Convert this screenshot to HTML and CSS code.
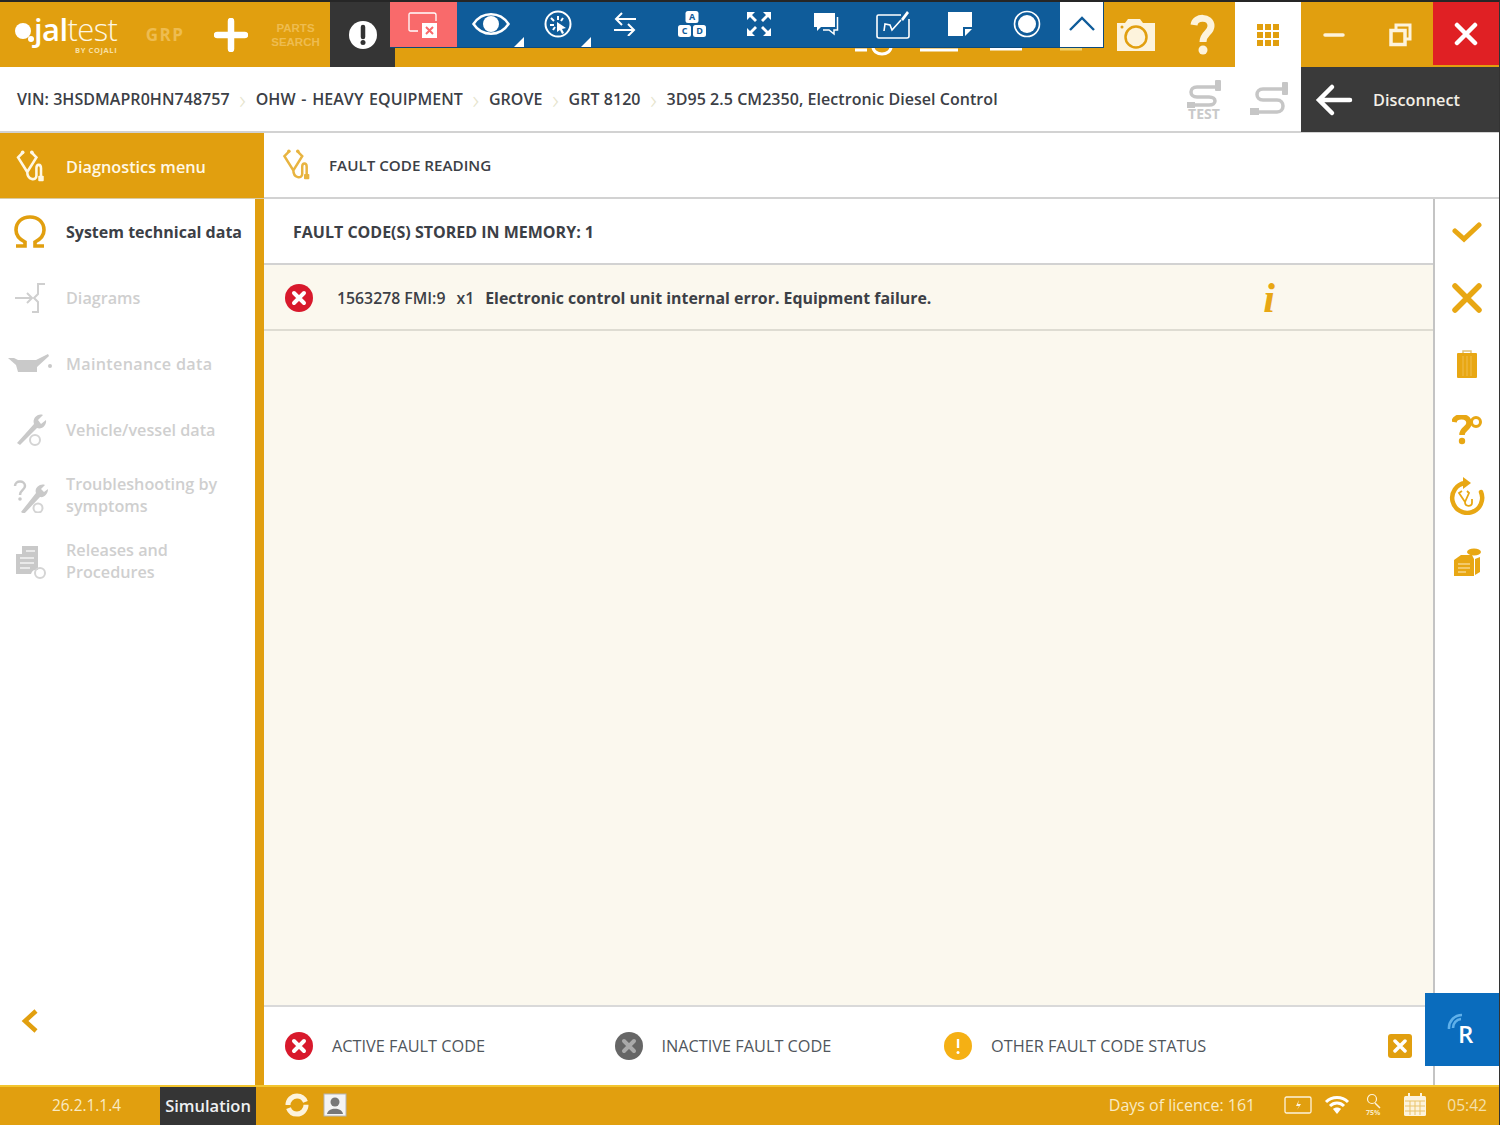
FILE: index.html
```html
<!DOCTYPE html>
<html lang="en">
<head>
<meta charset="utf-8">
<title>Jaltest - Fault code reading</title>
<link rel="stylesheet" href="styles.css">
</head>
<body>
<svg class="defs" width="0" height="0">
  <symbol id="steth" viewBox="0 0 30 36">
    <path d="M7 3 2 8 12 24 22 8 17 3M12 24C12 33 22 34 22 28V20C22 15 27 15 27 20V29" fill="none" stroke="currentColor" stroke-width="2.800"/>
    <rect x="24" y="28" width="6" height="6" rx="1" fill="currentColor"/>
    <circle cx="7" cy="2.500" r="2" fill="currentColor"/>
    <circle cx="17" cy="2.500" r="2" fill="currentColor"/>
  </symbol>
  <symbol id="xcircle" viewBox="0 0 28 28">
    <circle cx="14" cy="14" r="14" fill="#d8192c"/>
    <path d="M9 9 19 19M19 9 9 19" stroke="#fff" stroke-width="4" stroke-linecap="round"/>
  </symbol>
</svg>
<div class="app">
  <header class="topbar">
    <div class="logo">
      <span class="logo-dot"><span class="logo-dot-sm"></span></span>
      <div class="logo-text">
        <span class="logo-word"><b>jal</b>test</span>
        <span class="logo-by">BY COJALI</span>
      </div>
    </div>
    <div class="cell grp">GRP</div>
    <div class="cell">
      <svg class="ic-34" viewBox="0 0 34 34"><path d="M17 3V31M3 17H31" stroke="#fff" stroke-width="6.500" stroke-linecap="round"/></svg>
    </div>
    <div class="cell parts">PARTS<br>SEARCH</div>
    <div class="cell alert">
      <svg class="ic-28" viewBox="0 0 28 28"><circle cx="14" cy="14" r="14" fill="#fff"/><path d="M14 6V16" stroke="#333" stroke-width="4.500" stroke-linecap="round"/><circle cx="14" cy="21.500" r="2.500" fill="#333"/></svg>
    </div>
    <div class="hidden-strip">
      <svg class="peek" viewBox="0 0 708 20">
        <path d="M460 3H472M478 0A9 7 0 0 0 496 0M525 3H563M595 2H627" fill="none" stroke="#fff" stroke-width="3"/>
        <path d="M665 2H687" fill="none" stroke="#f3d36c" stroke-width="3"/>
      </svg>
    </div>
    <div class="cell">
      <svg class="ic-44" viewBox="0 0 44 36"><path d="M3 6H11L14 2H26L29 6H41V34H3Z" fill="#fdf3dc"/><circle cx="22" cy="20" r="10.500" fill="none" stroke="#e19f0f" stroke-width="2.500"/><circle cx="8" cy="10" r="1.500" fill="#e19f0f"/></svg>
    </div>
    <div class="cell">
      <svg class="ic-44" viewBox="0 0 44 44"><path d="M14 12C15 3 31 3 31 13 31 20 23 20 23 29" fill="none" stroke="#fdf3dc" stroke-width="7"/><circle cx="23" cy="37" r="4.500" fill="#fdf3dc"/></svg>
    </div>
    <div class="cell cell-white">
      <svg class="ic-24" viewBox="0 0 24 24"><path d="M1 1H7V7H1ZM9 1H15V7H9ZM17 1H23V7H17ZM1 9H7V15H1ZM9 9H15V15H9ZM17 9H23V15H17ZM1 17H7V23H1ZM9 17H15V23H9ZM17 17H23V23H17Z" fill="#e19f0f"/></svg>
    </div>
    <div class="cell">
      <svg class="ic-24" viewBox="0 0 24 24"><path d="M3 12H21" stroke="#fdf3dc" stroke-width="3.500" stroke-linecap="round"/></svg>
    </div>
    <div class="cell">
      <svg class="ic-24" viewBox="0 0 24 24"><path d="M8 6V2H22V16H17" fill="none" stroke="#fdf3dc" stroke-width="3"/><rect x="3" y="7.500" width="14" height="14" fill="none" stroke="#fdf3dc" stroke-width="3.500"/></svg>
    </div>
    <div class="cell cell-red">
      <svg class="ic-24" viewBox="0 0 24 24"><path d="M3 3 21 21M21 3 3 21" stroke="#fff" stroke-width="4.500" stroke-linecap="round"/></svg>
    </div>

    <nav class="remote">
      <div class="rbtn rbtn-close">
        <svg class="ic-32" viewBox="0 0 32 26"><path d="M10 19H2.500Q1 19 1 17.500V2.500Q1 1 2.500 1H26Q28 1 28 3V9" fill="none" stroke="#fff" stroke-width="1.300"/><rect x="14" y="11" width="15" height="15" fill="#fff"/><path d="M18 15 25 22M25 15 18 22" stroke="#f96a6b" stroke-width="2"/></svg>
      </div>
      <div class="rbtn rbtn-corner">
        <svg class="ic-38" viewBox="0 0 38 26"><path d="M1.500 13C10 0 28 0 36.500 13 28 26 10 26 1.500 13Z" fill="none" stroke="#fff" stroke-width="2.500"/><circle cx="19" cy="13" r="8" fill="#fff"/></svg>
      </div>
      <div class="rbtn rbtn-corner">
        <svg class="ic-28" viewBox="0 0 28 28"><circle cx="14" cy="14" r="12.500" fill="none" stroke="#fff" stroke-width="2"/><path d="M14 6V10M7 8 10 11M6 15H10M9 20 11 17M19 8 17 11" stroke="#fff" stroke-width="2"/><path d="M13 12 22 18 18 19 20 23 18 24 16 20 13 22Z" fill="#fff"/></svg>
      </div>
      <div class="rbtn">
        <svg class="ic-24" viewBox="0 0 24 24"><path d="M23 7H3M9 1 3 7 9 13M1 18H21M15 12 21 18 15 24" fill="none" stroke="#fff" stroke-width="2"/></svg>
      </div>
      <div class="rbtn">
        <svg class="ic-30" viewBox="0 0 30 26">
          <rect x="8.500" y="0" width="13" height="12" rx="2.500" fill="#fff"/><rect x="1" y="14" width="13" height="12" rx="2.500" fill="#fff"/><rect x="16" y="14" width="13" height="12" rx="2.500" fill="#fff"/>
          <text class="key" x="15" y="9">A</text><text class="key" x="7.500" y="23">C</text><text class="key" x="22.500" y="23">D</text>
        </svg>
      </div>
      <div class="rbtn">
        <svg class="ic-26" viewBox="0 0 26 26"><path d="M1 9V1H9L6 4 11 9 9 11 4 6ZM25 9V1H17L20 4 15 9 17 11 22 6ZM1 17V25H9L6 22 11 17 9 15 4 20ZM25 17V25H17L20 22 15 17 17 15 22 20Z" fill="#fff"/></svg>
      </div>
      <div class="rbtn">
        <svg class="ic-26" viewBox="0 0 26 26"><path d="M1 2H22V16H8L4 20V16H1Z" fill="#fff"/><path d="M24.500 6V19H21V23L16 19H10" fill="none" stroke="#fff" stroke-width="1.500"/></svg>
      </div>
      <div class="rbtn">
        <svg class="ic-34" viewBox="0 0 34 30"><path d="M25 6H2.500Q1 6 1 7.500V27Q1 29 3 29H31Q33 29 33 27V10" fill="none" stroke="#fff" stroke-width="1.600"/><path d="M8 22 9 15 14 16 16 21 25 11" fill="none" stroke="#fff" stroke-width="1.600"/><path d="M25 10 31 2 33 4 27 12Z" fill="#fff"/></svg>
      </div>
      <div class="rbtn">
        <svg class="ic-26" viewBox="0 0 26 26"><path d="M1 1H25V16H16V25H1ZM18 18H25L18 25Z" fill="#fff"/></svg>
      </div>
      <div class="rbtn">
        <svg class="ic-28" viewBox="0 0 28 28"><circle cx="14" cy="14" r="12.500" fill="none" stroke="#fff" stroke-width="1.600"/><circle cx="14" cy="14" r="9" fill="#fff"/></svg>
      </div>
      <div class="rbtn rbtn-up">
        <svg class="ic-28" viewBox="0 0 28 28"><path d="M2 20 14 8 26 20" fill="none" stroke="#0f5c9a" stroke-width="2.400"/></svg>
      </div>
    </nav>
  </header>

  <div class="crumbs">
    <div class="crumb-list">
      <span>VIN: 3HSDMAPR0HN748757</span><span class="sep">›</span>
      <span class="crumb-wide">OHW - HEAVY EQUIPMENT</span><span class="sep">›</span>
      <span>GROVE</span><span class="sep">›</span>
      <span>GRT 8120</span><span class="sep">›</span>
      <span>3D95 2.5 CM2350, Electronic Diesel Control</span>
    </div>
    <div class="conn">
      <div class="conn-ic">
        <svg class="ic-test" viewBox="0 0 36 28"><path d="M30 7H11C3 7 3 17 11 17H23C31 17 31 25 23 25H8" fill="none" stroke="#c6c6c6" stroke-width="3.500"/><rect x="29" y="0" width="6" height="11" rx="1" fill="#c6c6c6"/><rect x="1" y="22" width="8" height="6" fill="#c6c6c6"/></svg>
        <span class="test-label">TEST</span>
      </div>
      <div class="conn-ic">
        <svg class="ic-plug" viewBox="0 0 40 36"><path d="M34 8H14C6 8 6 19 14 19H28C36 19 36 31 28 31H10" fill="none" stroke="#c6c6c6" stroke-width="3.500"/><rect x="33" y="1" width="6" height="13" rx="1" fill="#c6c6c6"/><rect x="1" y="27" width="9" height="7" fill="#c6c6c6"/></svg>
      </div>
    </div>
    <div class="disconnect">
      <svg class="ic-38" viewBox="0 0 38 32"><path d="M35 16H5M17 3 4 16 17 29" fill="none" stroke="#fff" stroke-width="4.500" stroke-linecap="round"/></svg>
      <span>Disconnect</span>
    </div>
  </div>

  <div class="workspace">
    <aside class="sidebar">
      <div class="side-head">
        <svg class="ic-steth"><use href="#steth"/></svg>
        <span>Diagnostics menu</span>
      </div>
      <ul class="side-menu">
        <li class="side-item active">
          <span class="side-ic"><svg class="ic-36" viewBox="0 0 36 36"><path d="M4 32H13V28C7 25 4 21 4 16 4 8 10 3 18 3 26 3 32 8 32 16 32 21 29 25 23 28V32H32" fill="none" stroke="#e19f0f" stroke-width="3.600"/></svg></span>
          <span>System technical data</span>
        </li>
        <li class="side-item">
          <span class="side-ic"><svg class="ic-36" viewBox="0 0 36 36"><path d="M3 18H20M15 13 20 18 15 23M33 4H26V14L22 18 26 22V32H20" fill="none" stroke="#cfcfcf" stroke-width="2"/></svg></span>
          <span>Diagrams</span>
        </li>
        <li class="side-item side-item-wide">
          <span class="side-ic"><svg class="ic-oil" viewBox="0 0 44 22"><path d="M0 5H6L10 7H28L40 1 41 3 29 14V19H10L8 12Z" fill="#c9c9c9"/><circle cx="42" cy="13" r="2" fill="#c9c9c9"/></svg></span>
          <span>Maintenance data</span>
        </li>
        <li class="side-item">
          <span class="side-ic"><svg class="ic-36" viewBox="0 0 36 36"><path d="M5 31 22 12C20 6 26 1 31 3L26 8 29 12 34 8C35 13 30 18 25 16L8 33Z" fill="#c9c9c9"/><circle cx="23" cy="28" r="5" fill="none" stroke="#d4d4d4" stroke-width="2"/></svg></span>
          <span>Vehicle/vessel data</span>
        </li>
        <li class="side-item side-item-two">
          <span class="side-ic"><svg class="ic-36" viewBox="0 0 36 36"><path d="M9 35 24 16C22 11 28 6 33 8L29 12 32 15 36 12C36 17 32 21 28 20L12 37Z" fill="#c9c9c9"/><path d="M3 9C3 3 13 3 13 9 13 13 8 13 8 18" fill="none" stroke="#c9c9c9" stroke-width="2.500"/><circle cx="8" cy="22" r="1.800" fill="#c9c9c9"/><circle cx="26" cy="31" r="4.500" fill="none" stroke="#d4d4d4" stroke-width="2"/></svg></span>
          <span>Troubleshooting by<br>symptoms</span>
        </li>
        <li class="side-item side-item-two">
          <span class="side-ic"><svg class="ic-36" viewBox="0 0 36 36"><path d="M10 3H26V27H22A6 6 0 0 0 19 31H4V11H10Z" fill="#c9c9c9"/><path d="M8 15H22M8 20H22M8 25H18M14 8H23" stroke="#f3f3f3" stroke-width="1.500"/><circle cx="28" cy="30" r="5" fill="none" stroke="#d4d4d4" stroke-width="2"/></svg></span>
          <span>Releases and<br>Procedures</span>
        </li>
      </ul>
      <div class="side-back">
        <svg class="ic-chev" viewBox="0 0 18 26"><path d="M15 3 4 13 15 23" fill="none" stroke="#e19f0f" stroke-width="4.500"/></svg>
      </div>
    </aside>
    <main class="main">
      <div class="main-head">
        <svg class="ic-steth-sm"><use href="#steth"/></svg>
        <span>FAULT CODE READING</span>
      </div>
      <div class="main-body">
        <section class="content">
          <div class="stored">FAULT CODE(S) STORED IN MEMORY: 1</div>
          <div class="fault-area">
            <div class="fault-row">
              <svg class="ic-28"><use href="#xcircle"/></svg>
              <span class="fault-code">1563278 FMI:9</span>
              <span class="fault-count">x1</span>
              <span class="fault-text">Electronic control unit internal error. Equipment failure.</span>
              <span class="info">i</span>
            </div>
          </div>
          <div class="legend">
            <div class="legend-item">
              <svg class="ic-28"><use href="#xcircle"/></svg>
              <span>ACTIVE FAULT CODE</span>
            </div>
            <div class="legend-item">
              <svg class="ic-28" viewBox="0 0 28 28"><circle cx="14" cy="14" r="14" fill="#666"/><path d="M9 9 19 19M19 9 9 19" stroke="#aaa" stroke-width="4" stroke-linecap="round"/></svg>
              <span>INACTIVE FAULT CODE</span>
            </div>
            <div class="legend-item">
              <svg class="ic-28" viewBox="0 0 28 28"><circle cx="14" cy="14" r="14" fill="#f5b014"/><path d="M14 7V16" stroke="#fff" stroke-width="2.400"/><circle cx="14" cy="20.500" r="1.500" fill="#fff"/></svg>
              <span>OTHER FAULT CODE STATUS</span>
            </div>
            <div class="legend-close">
              <svg class="ic-14" viewBox="0 0 14 14"><path d="M2 2 12 12M12 2 2 12" stroke="#fff" stroke-width="3.500" stroke-linecap="round"/></svg>
            </div>
          </div>
        </section>
        <aside class="rail">
          <div class="rail-btn"><svg class="ic-30" viewBox="0 0 30 30"><path d="M3 14 12 22 27 8" fill="none" stroke="#e8a713" stroke-width="5" stroke-linecap="round"/></svg></div>
          <div class="rail-btn"><svg class="ic-30" viewBox="0 0 30 30"><path d="M3 3 27 27M27 3 3 27" stroke="#e8a713" stroke-width="5.500" stroke-linecap="round"/></svg></div>
          <div class="rail-btn"><svg class="ic-30" viewBox="0 0 30 30"><path d="M11 4V2H19V4" fill="none" stroke="#e0c27a" stroke-width="1.500"/><rect x="5" y="4" width="20" height="25" rx="1" fill="#e8a713"/><path d="M11 7V27M15 7V27M19 7V27" stroke="#f0bd4e" stroke-width="1"/></svg></div>
          <div class="rail-btn"><svg class="ic-30" viewBox="0 0 30 30"><path d="M2 7C3 0 17 0 17 8 17 14 10 13 10 20" fill="none" stroke="#e8a713" stroke-width="5.500"/><circle cx="10" cy="26" r="3.200" fill="#e8a713"/><circle cx="24" cy="7" r="4.500" fill="none" stroke="#e8a713" stroke-width="3"/></svg></div>
          <div class="rail-btn"><svg class="ic-38" viewBox="0 0 38 38"><path d="M17 6A15 15 0 1 0 33 15" fill="none" stroke="#e8a713" stroke-width="4.500" stroke-linecap="round"/><path d="M15 0 23 6 15 12Z" fill="#e8a713"/><path d="M14 14 11 16 17 25 21 16 19 14M17 25C17 30 24 30 24 26V22" fill="none" stroke="#e8a713" stroke-width="1.800"/></svg></div>
          <div class="rail-btn"><svg class="ic-30" viewBox="0 0 30 30"><path d="M9 8H20L22 12V29H2V13Z" fill="#e8a713"/><path d="M23 12 28 10V25L23 28Z" fill="#e8a713"/><ellipse cx="22" cy="5" rx="7" ry="3.500" fill="#e8a713"/><path d="M6 17H18M6 21H18M6 25H14" stroke="#f6d586" stroke-width="1.500"/></svg></div>
        </aside>
      </div>
      <button class="remote-r" type="button">
        <svg class="ic-r" viewBox="0 0 18 18"><path d="M2 16A13 13 0 0 1 15 2M6 15A9 9 0 0 1 14 6" fill="none" stroke="#5fb0ea" stroke-width="2.600"/></svg>
        <span>R</span>
      </button>
    </main>
  </div>

  <footer class="footer">
    <span class="version">26.2.1.1.4</span>
    <span class="sim">Simulation</span>
    <div class="foot-left">
      <svg class="ic-24" viewBox="0 0 24 24"><circle cx="12" cy="12" r="9" fill="none" stroke="#fdf3dc" stroke-width="5" stroke-dasharray="25 3"/><path d="M9 12H15" stroke="#e19f0f" stroke-width="2"/></svg>
      <svg class="ic-24" viewBox="0 0 24 24"><rect x="1" y="1" width="22" height="22" fill="#f4f4f4" stroke="#b4b4b4"/><circle cx="12" cy="9" r="4.500" fill="#777"/><path d="M4 21C5 14 19 14 20 21Z" fill="#777"/></svg>
    </div>
    <div class="foot-right">
      <span class="licence">Days of licence: 161</span>
      <svg class="ic-batt" viewBox="0 0 28 18"><rect x="1" y="1" width="26" height="16" rx="1.500" fill="none" stroke="#fdf3dc" stroke-width="1.300"/><path d="M15 4 12 10H15L13 14 17 8H14Z" fill="#fdf3dc"/></svg>
      <svg class="ic-wifi" viewBox="0 0 26 20"><path d="M2 7C8 1 18 1 24 7M6 11C10 7 16 7 20 11" fill="none" stroke="#fff" stroke-width="3"/><path d="M9 14C11 12 15 12 17 14L13 19Z" fill="#fff"/></svg>
      <span class="foot-search">
        <svg class="ic-mag" viewBox="0 0 16 16"><circle cx="7" cy="6" r="4.500" fill="none" stroke="#fdf3dc" stroke-width="1.200"/><path d="M10 10 15 15" stroke="#fdf3dc" stroke-width="1.500"/></svg>
        <span class="pct">75%</span>
      </span>
      <svg class="ic-cal" viewBox="0 0 24 24"><rect x="1" y="3" width="22" height="20" rx="1.500" fill="#fdf3dc"/><path d="M2 8H22M7 8V22M12 8V22M17 8V22M2 13H22M2 18H22" stroke="#e9c36a" stroke-width="1"/><path d="M6 0V5M18 0V5" stroke="#fdf3dc" stroke-width="2"/></svg>
      <span class="clock">05:42</span>
    </div>
  </footer>
</div>
</body>
</html>
```
FILE: styles.css
```css
* { box-sizing: border-box; }
html, body { margin: 0; padding: 0; }
body { font-family: "Open Sans", "Liberation Sans", sans-serif; color: #3c4046; background: #fff; }
ul { list-style: none; margin: 0; padding: 0; }
svg { display: block; flex: none; }
.defs { position: absolute; }

.ic-14 { width: 14px; height: 14px; }
.ic-24 { width: 24px; height: 24px; }
.ic-26 { width: 26px; height: 26px; }
.ic-28 { width: 28px; height: 28px; }
.ic-30 { width: 30px; height: 30px; }
.ic-32 { width: 32px; height: 26px; }
.ic-34 { width: 34px; height: 34px; }
.ic-36 { width: 36px; height: 36px; }
.ic-38 { width: 38px; height: 38px; }
.ic-44 { width: 44px; height: 44px; }

.app {
  position: relative;
  width: 1500px;
  height: 1125px;
  display: flex;
  flex-direction: column;
  overflow: hidden;
  border-top: 2px solid #262626;
  border-right: 1px solid #333;
}

/* top bar */
.topbar { position: relative; height: 65px; flex: none; display: flex; background: #e19f0f; }
.logo { width: 132px; display: flex; align-items: flex-start; padding: 9px 0 0 15px; gap: 3px; color: #fdf6e3; }
.logo-dot { position: relative; width: 16px; height: 16px; margin-top: 12px; border-radius: 50%; background: #fff; flex: none; }
.logo-dot-sm { position: absolute; right: -3px; bottom: -3px; width: 6px; height: 6px; border-radius: 50%; background: #fff; }
.logo-text { display: flex; flex-direction: column; align-items: flex-end; }
.logo-word { font-size: 31px; line-height: 36px; font-weight: 300; letter-spacing: -.6px; }
.logo-word b { font-weight: 600; color: #fff; }
.logo-by { font-size: 7.500px; line-height: 7px; font-weight: 700; letter-spacing: .6px; color: #f7dfa4; }
.cell { width: 66px; flex: none; display: flex; align-items: center; justify-content: center; }
.grp { font-size: 17px; font-weight: 700; letter-spacing: 1.500px; color: #eebc50; }
.parts { font-family: "Liberation Sans", sans-serif; font-size: 11.500px; line-height: 14px; font-weight: 700; color: #eebc50; text-align: center; padding-right: 3px; }
.alert { width: 65px; background: #353535; }
.hidden-strip { flex: 1; position: relative; }
.peek { position: absolute; left: 0; top: 45px; width: 708px; height: 20px; }
.cell-white { background: #fff; }
.cell-red { background: #e02024; margin-bottom: 2px; }

.remote { position: absolute; left: 390px; top: 0; width: 714px; height: 46px; display: flex; background: #0f5c9a; border: 1px solid #0d4a7c; border-left: 0; border-top: 0; }
.rbtn { position: relative; width: 67px; flex: none; display: flex; align-items: center; justify-content: center; padding-bottom: 1px; }
.rbtn-close { background: #f96a6b; padding-bottom: 0; }
.rbtn-corner::after { content: ""; position: absolute; right: 0; bottom: 0; border-style: solid; border-width: 0 0 10px 10px; border-color: transparent transparent #fff transparent; }
.rbtn-up { flex: 1; background: #fff; }
.key { font-family: "Open Sans", sans-serif; font-size: 9px; font-weight: 700; fill: #0f5c9a; text-anchor: middle; }

/* breadcrumb */
.crumbs { height: 66px; flex: none; display: flex; align-items: stretch; background: #fff; border-bottom: 2px solid #d2d2d2; }
.crumb-list { flex: 1; display: flex; align-items: center; padding-left: 17px; font-size: 16px; font-weight: 600; letter-spacing: .05px; color: #3c4046; white-space: nowrap; }
.crumb-wide { word-spacing: 1.500px; }
.sep { width: 26px; flex: none; text-align: center; font-weight: 300; font-size: 26px; line-height: 20px; color: #e6e4cc; }
.conn { display: flex; align-items: center; gap: 27px; padding-right: 12px; }
.conn-ic { display: flex; flex-direction: column; align-items: center; }
.ic-test { width: 36px; height: 28px; }
.ic-plug { width: 40px; height: 36px; }
.test-label { font-size: 14px; line-height: 11px; font-weight: 700; color: #c9c9c9; }
.disconnect { width: 198px; margin-bottom: -1px; display: flex; align-items: center; gap: 20px; padding-left: 14px; background: #3a3a3a; color: #f3efe6; font-size: 16.300px; font-weight: 600; }

/* workspace */
.workspace { flex: 1; display: flex; min-height: 0; }
.sidebar { width: 264px; flex: none; display: flex; flex-direction: column; border-right: 9px solid #e19f0f; }
.side-head { height: 66px; flex: none; margin-right: -9px; display: flex; align-items: center; gap: 22px; padding: 2px 0 0 16px; background: #e19f0f; color: #fff8e4; font-size: 16.300px; font-weight: 600; border-bottom: 1px solid #d9cba5; }
.ic-steth { width: 28px; height: 33px; color: #fff8e4; }
.side-menu { display: flex; flex-direction: column; }
.side-item { height: 66px; display: flex; align-items: center; font-size: 16.200px; line-height: 22px; font-weight: 600; color: #cfcfcf; white-space: nowrap; }
.side-item.active { color: #3c4046; font-size: 16px; font-weight: 700; }
.side-item-wide { letter-spacing: .3px; }
.side-item-two { padding-bottom: 2px; }
.side-ic { width: 66px; flex: none; display: flex; justify-content: center; padding-right: 6px; }
.ic-oil { width: 44px; height: 22px; }
.side-back { margin-top: auto; margin-bottom: 51px; padding-left: 21px; }
.ic-chev { width: 18px; height: 26px; }

/* main */
.main { position: relative; flex: 1; display: flex; flex-direction: column; min-width: 0; }
.main-head { height: 66px; flex: none; display: flex; align-items: center; gap: 19px; padding-left: 18px; font-size: 15.200px; font-weight: 600; border-bottom: 2px solid #d2d2d2; }
.ic-steth-sm { width: 28px; height: 32px; color: #e8b440; }
.main-body { flex: 1; display: flex; min-height: 0; }
.content { flex: 1; display: flex; flex-direction: column; min-width: 0; }
.stored { height: 66px; flex: none; display: flex; align-items: center; padding: 2px 0 0 29px; font-size: 16px; font-weight: 700; border-bottom: 2px solid #d2d2d2; }
.fault-area { flex: 1; background: #fbf8ee; }
.fault-row { height: 66px; display: flex; align-items: center; padding: 2px 0 0 21px; font-size: 15.800px; font-weight: 600; border-bottom: 2px solid #dedcd2; white-space: nowrap; }
.fault-code { margin-left: 24px; }
.fault-count { margin-left: 11px; }
.fault-text { margin-left: 11px; font-size: 15.900px; font-weight: 700; }
.info { margin-left: 332px; font-family: "Liberation Serif", serif; font-style: italic; font-weight: 700; font-size: 42px; line-height: 38px; color: #e8a713; }
.legend { height: 80px; flex: none; display: flex; align-items: center; padding: 0 21px; border-top: 2px solid #d9d9d9; font-size: 16.300px; color: #50565c; }
.legend-item { width: 329.500px; flex: none; display: flex; align-items: center; gap: 19px; white-space: nowrap; }
.legend-close { width: 24px; height: 24px; margin-left: auto; display: flex; align-items: center; justify-content: center; border-radius: 3px; background: #e19f0f; }
.rail { width: 66px; flex: none; display: flex; flex-direction: column; border-left: 2px solid #c4c4c4; }
.rail-btn { height: 66px; flex: none; display: flex; align-items: center; justify-content: center; }
.remote-r { position: absolute; right: 0; bottom: 19px; width: 74px; height: 73px; border: 0; padding: 0; background: #0a6cbd; color: #fff; font-family: "Open Sans", sans-serif; font-size: 24px; font-weight: 600; }
.remote-r span { position: absolute; left: 33px; top: 26px; line-height: 30px; }
.ic-r { position: absolute; left: 22px; top: 20px; width: 18px; height: 18px; }

/* footer */
.footer { height: 40px; flex: none; display: flex; align-items: center; padding-bottom: 2px; background: #e19f0f; border-top: 2px solid #f3c52e; color: #f9ebc4; font-size: 15.400px; }
.version { width: 160px; padding-left: 52px; }
.sim { width: 96px; height: 38px; margin-bottom: -2px; display: flex; align-items: center; justify-content: center; padding-bottom: 2px; background: #353535; color: #eef0f2; font-size: 16.500px; font-weight: 600; }
.foot-left { display: flex; align-items: center; gap: 14px; padding-left: 29px; }
.foot-right { flex: 1; display: flex; align-items: center; justify-content: flex-end; padding-right: 12px; }
.licence { font-size: 16px; margin-right: 29px; }
.ic-batt { width: 28px; height: 18px; margin-right: 12px; }
.ic-wifi { width: 26px; height: 20px; margin-right: 13px; }
.foot-search { width: 20px; display: flex; flex-direction: column; align-items: center; margin-right: 20px; }
.ic-mag { width: 16px; height: 16px; }
.pct { font-size: 7px; line-height: 8px; font-weight: 700; }
.ic-cal { width: 24px; height: 24px; margin-right: 20px; }
.clock { font-size: 15.600px; color: #f5e0ab; }
```
